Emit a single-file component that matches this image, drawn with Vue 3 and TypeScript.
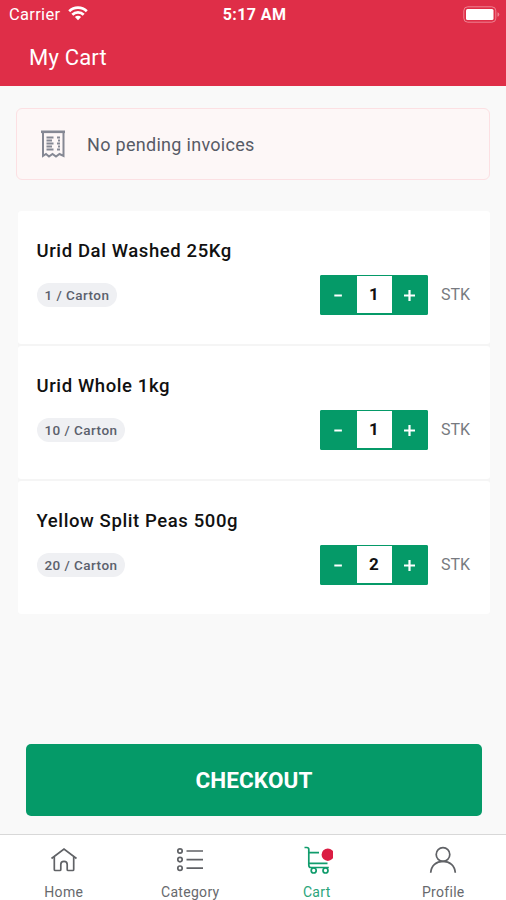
<script setup lang="ts">
import { ref } from 'vue'

interface CartItem {
  name: string
  pack: string
  quantity: number
}

const items = ref<CartItem[]>([
  { name: 'Urid Dal Washed 25Kg', pack: '1 / Carton', quantity: 1 },
  { name: 'Urid Whole 1kg', pack: '10 / Carton', quantity: 1 },
  { name: 'Yellow Split Peas 500g', pack: '20 / Carton', quantity: 2 },
])

const activeTab = ref('Cart')
const tabs = ['Home', 'Category', 'Cart', 'Profile']

function change(item: CartItem, delta: number) {
  item.quantity = Math.max(0, item.quantity + delta)
}
</script>

<template>
  <div class="screen">
    <header class="header">
      <div class="status">
        <div class="carrier">
          <span>Carrier</span>
          <svg width="20" height="15" viewBox="0 0 20 15">
            <path d="M10 14.3 6.9 11.1a4.4 4.4 0 0 1 6.2 0Z" fill="#fff" />
            <path d="M4.3 8.7a8 8 0 0 1 11.4 0M1.2 5.2a12.6 12.6 0 0 1 17.6 0" fill="none" stroke="#fff" stroke-width="2.7" />
          </svg>
        </div>
        <span class="clock">5:17 AM</span>
        <svg class="battery" width="37" height="17" viewBox="0 0 37 17">
          <rect x="0.8" y="0.8" width="32" height="15.4" rx="4" fill="none" stroke="#ee8292" stroke-width="1" />
          <rect x="3" y="3" width="27.5" height="11" rx="1.5" fill="#fff" />
          <path d="M34.5 6.2q1.8.6 1.8 2.3t-1.8 2.3Z" fill="#ee8292" />
        </svg>
      </div>
      <h1 class="title">My Cart</h1>
    </header>

    <main class="content">
      <section class="notice">
        <svg width="26" height="29" viewBox="0 0 26 29" fill="none" stroke="#858894">
          <path d="M1 1.8h24" stroke-width="2.6" />
          <path d="M3 3v23l3-2 3 2.5 3.5-2.500 3.500 2.500 3.500-2.500 4 2V3" stroke-width="2" />
          <path d="M6.500 7.500h7M6.500 10.500h5.500M6.500 13.500h7M6.500 16.500h5.500M6.500 19.500h7" stroke-width="1.900" />
          <path d="M17 7.500h3M18 10.500h2M17 13.500h3M18 16.500h2M17 19.500h3" stroke-width="1.900" />
        </svg>
        <span>No pending invoices</span>
      </section>

      <ul class="items">
        <li v-for="item in items" :key="item.name" class="item">
          <h2 class="name">{{ item.name }}</h2>
          <div class="row">
            <span class="pack">{{ item.pack }}</span>
            <div class="stepper">
              <button type="button" @click="change(item, -1)">
                <svg width="16" height="16" viewBox="0 0 16 16"><path d="M4.300 8.500h7.600" /></svg>
              </button>
              <span class="quantity">{{ item.quantity }}</span>
              <button type="button" @click="change(item, 1)">
                <svg width="16" height="16" viewBox="0 0 16 16"><path d="M2 8.500h11M7.500 3v11" /></svg>
              </button>
            </div>
            <span class="unit">STK</span>
          </div>
        </li>
      </ul>

      <button type="button" class="checkout">CHECKOUT</button>
    </main>

    <nav class="tabs">
      <button
        v-for="tab in tabs"
        :key="tab"
        type="button"
        class="tab"
        :class="[tab.toLowerCase(), { active: tab === activeTab }]"
        @click="activeTab = tab"
      >
        <svg width="32" height="32" viewBox="0 0 32 32">
          <g v-if="tab === 'Home'">
            <path d="M3.500 14.500 16 5l12.500 9.500" />
            <path d="M6.300 13v12.500q0 1 1 1h4.500q1 0 1-1V20.500a3.200 3.200 0 0 1 6.400 0v5q0 1 1 1h4.500q1 0 1-1V13" />
          </g>
          <g v-else-if="tab === 'Category'">
            <path d="M12.500 7h16.500M12.500 15.600h16.500M12.500 24.200h16.500" />
            <circle cx="6" cy="7" r="2.200" />
            <circle cx="6" cy="15.600" r="2.200" />
            <circle cx="6" cy="24.200" r="2.200" />
          </g>
          <g v-else-if="tab === 'Cart'">
            <path d="M3.500 3.500h2.300q2 0 2 2v15.500q0 2.500 2 2.500h18" />
            <path d="M8 8.700h10M8 19.300h18.500" />
            <circle cx="12.700" cy="26.500" r="2.500" />
            <circle cx="24.500" cy="26.500" r="2.500" />
            <circle class="badge" cx="26.800" cy="10.700" r="6.200" />
          </g>
          <g v-else>
            <circle cx="16" cy="10.500" r="6.800" />
            <path d="M3.700 28.700c.5-7 5.500-11.400 12.300-11.400s11.800 4.400 12.300 11.400" />
          </g>
        </svg>
        <span>{{ tab }}</span>
      </button>
    </nav>
  </div>
</template>

<style>
body {
  margin: 0;
}
</style>

<style scoped>
.screen {
  display: flex;
  flex-direction: column;
  box-sizing: border-box;
  width: 100%;
  height: 900px;
  overflow: hidden;
  background: #f9f9f9;
  font-family: Roboto, 'Liberation Sans', sans-serif;
}

button {
  padding: 0;
  border: 0;
  font-family: inherit;
}

.header {
  flex: none;
  height: 86px;
  background: #df2e48;
  color: #fff;
}

.status {
  display: grid;
  grid-template-columns: 1fr auto 1fr;
  align-items: center;
  height: 29px;
  padding: 0 6px 0 9px;
}

.carrier {
  display: flex;
  align-items: center;
  gap: 8px;
  font-size: 16.500px;
  letter-spacing: 0.3px;
}

.carrier svg {
  margin-top: -2px;
}

.clock {
  font-size: 16px;
  font-weight: 700;
  letter-spacing: 0.4px;
}

.battery {
  justify-self: end;
}

.title {
  margin: 0;
  padding-left: 29px;
  font-size: 22px;
  font-weight: 400;
  line-height: 57px;
  letter-spacing: 0.2px;
}

.content {
  display: flex;
  flex: 1;
  flex-direction: column;
  padding: 22px 16px 18px;
}

.notice {
  display: flex;
  align-items: center;
  gap: 21px;
  box-sizing: border-box;
  height: 72px;
  padding-left: 23px;
  border: 1.500px solid #fce0e3;
  border-radius: 6px;
  background: #fdf7f7;
  color: #575b66;
  font-size: 18px;
  letter-spacing: 0.3px;
}

.items {
  display: flex;
  flex-direction: column;
  gap: 2px;
  margin: 31px 0 0 2px;
  padding: 0;
  list-style: none;
  border-radius: 3px;
  background: #f5f5f5;
}

.item {
  box-sizing: border-box;
  height: 133px;
  padding: 28px 20px 0 18.500px;
  border-radius: 3px;
  background: #fff;
}

.name {
  margin: 0;
  color: #111;
  font-size: 18.500px;
  font-weight: 500;
  line-height: 24px;
  letter-spacing: 0.6px;
}

.row {
  display: flex;
  align-items: center;
  height: 40px;
  margin-top: 11.500px;
}

.pack {
  padding: 0 8px;
  border-radius: 12px;
  background: #eff0f3;
  color: #5b606c;
  font-size: 13.500px;
  font-weight: 500;
  line-height: 24px;
  letter-spacing: 0.45px;
}

.stepper {
  display: grid;
  grid-template-columns: 36px 36px 36px;
  margin-left: auto;
  overflow: hidden;
  border-radius: 2px;
  background: #059a68;
}

.stepper button {
  display: grid;
  place-items: center;
  height: 40px;
  background: #059a68;
}

.stepper path {
  fill: none;
  stroke: #fff;
  stroke-width: 2.200;
}

.quantity {
  margin: 1.500px 0.500px;
  background: #fff;
  color: #111;
  font-size: 17px;
  font-weight: 700;
  line-height: 37px;
  text-align: center;
}

.unit {
  width: 29px;
  margin-left: 13px;
  color: #777a80;
  font-size: 16px;
}

.checkout {
  height: 72px;
  margin: auto 8px 0 10px;
  border-radius: 5px;
  background: #059a68;
  color: #fff;
  font-size: 22.500px;
  font-weight: 700;
  letter-spacing: 0.1px;
}

.tabs {
  display: grid;
  flex: none;
  grid-template-columns: repeat(4, 1fr);
  box-sizing: border-box;
  height: 66px;
  border-top: 1px solid #d8d8d8;
  background: #fff;
}

.tab {
  display: flex;
  flex-direction: column;
  align-items: center;
  gap: 4px;
  padding: 9px 0 0 1px;
  background: none;
  color: #67696d;
  font-size: 14px;
  line-height: 24px;
  letter-spacing: 0.3px;
}

.tab svg {
  fill: none;
  stroke: #606266;
  stroke-width: 1.700;
}

.tab.active {
  color: #2aa57b;
}

.tab.active svg {
  stroke: #109c6c;
}

.tab .badge {
  fill: #db1d43;
  stroke: none;
}
</style>
